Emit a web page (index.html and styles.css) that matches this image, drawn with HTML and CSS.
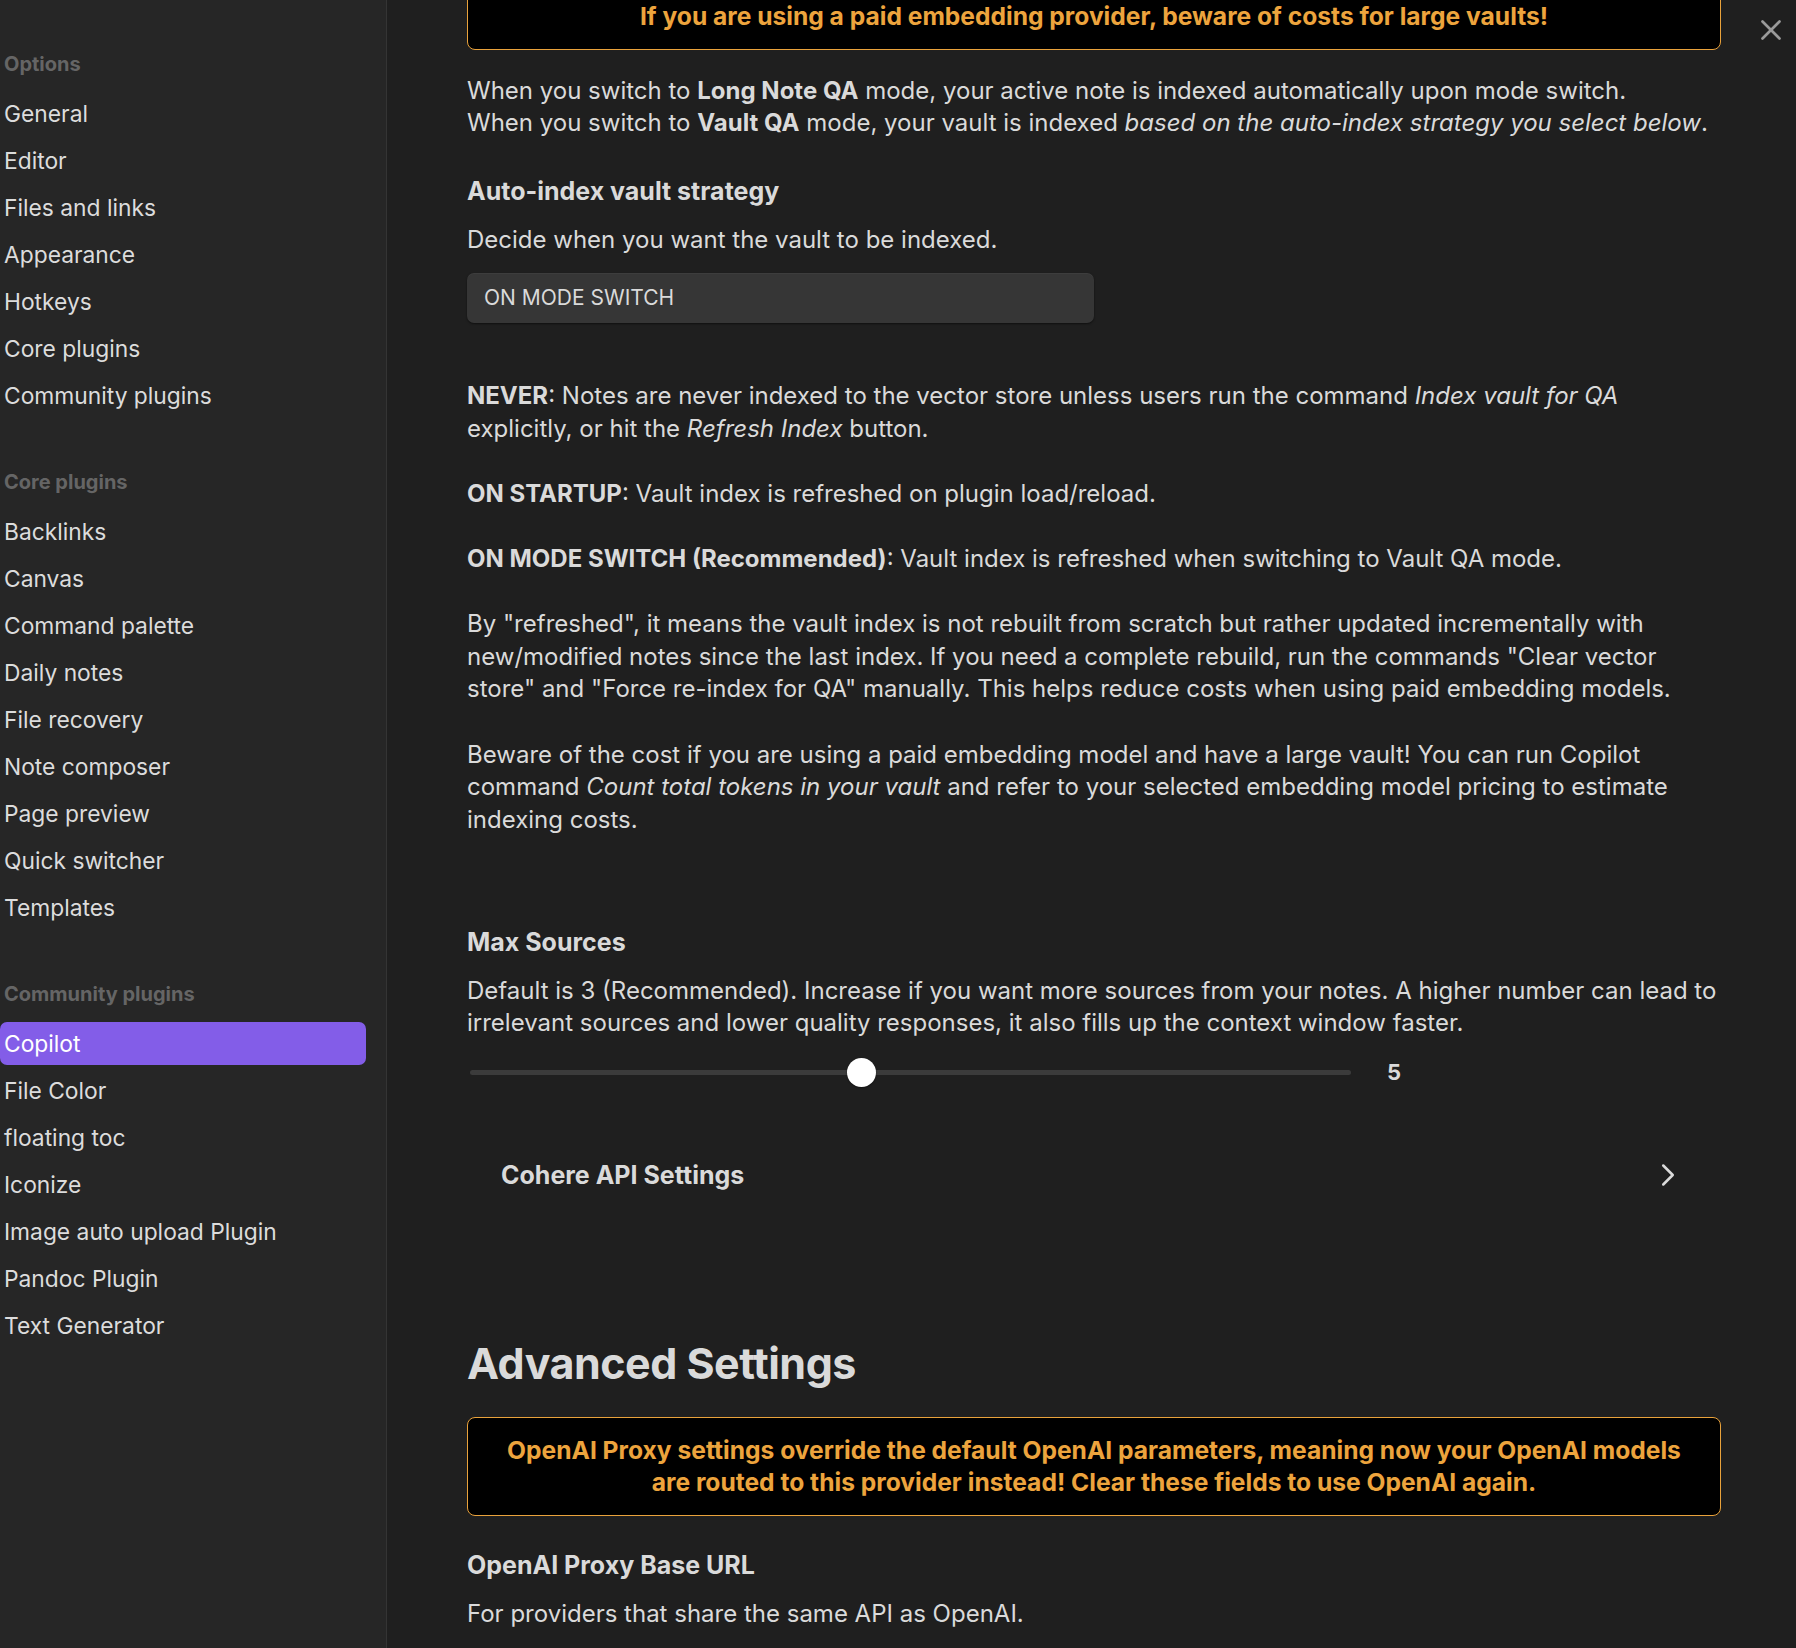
FILE: index.html
```html
<!DOCTYPE html>
<html lang="en">
<head>
<meta charset="utf-8">
<title>Settings - Copilot</title>
<link rel="stylesheet" href="styles.css">
</head>
<body>
<div class="modal">
  <nav class="sidebar">
    <div class="group">
      <div class="group-title">Options</div>
      <div class="nav-item">General</div>
      <div class="nav-item">Editor</div>
      <div class="nav-item">Files and links</div>
      <div class="nav-item">Appearance</div>
      <div class="nav-item">Hotkeys</div>
      <div class="nav-item">Core plugins</div>
      <div class="nav-item">Community plugins</div>
    </div>
    <div class="group">
      <div class="group-title">Core plugins</div>
      <div class="nav-item">Backlinks</div>
      <div class="nav-item">Canvas</div>
      <div class="nav-item">Command palette</div>
      <div class="nav-item">Daily notes</div>
      <div class="nav-item">File recovery</div>
      <div class="nav-item">Note composer</div>
      <div class="nav-item">Page preview</div>
      <div class="nav-item">Quick switcher</div>
      <div class="nav-item">Templates</div>
    </div>
    <div class="group">
      <div class="group-title">Community plugins</div>
      <div class="nav-item active">Copilot</div>
      <div class="nav-item">File Color</div>
      <div class="nav-item">floating toc</div>
      <div class="nav-item">Iconize</div>
      <div class="nav-item">Image auto upload Plugin</div>
      <div class="nav-item">Pandoc Plugin</div>
      <div class="nav-item">Text Generator</div>
    </div>
  </nav>

  <main class="content">
    <div class="callout callout-top">If you are using a paid embedding provider, beware of costs for large vaults!</div>

    <p class="desc intro">When you switch to <strong>Long Note QA</strong> mode, your active note is indexed automatically upon mode switch.<br>When you switch to <strong>Vault QA</strong> mode, your vault is indexed <em>based on the auto-index strategy you select below</em>.</p>

    <div class="setting-name auto-index">Auto-index vault strategy</div>
    <div class="desc setting-desc">Decide when you want the vault to be indexed.</div>
    <div class="dropdown">ON MODE SWITCH</div>

    <div class="explain">
      <p><strong>NEVER</strong>: Notes are never indexed to the vector store unless users run the command <em>Index vault for QA</em> explicitly, or hit the <em>Refresh Index</em> button.</p>
      <p><strong>ON STARTUP</strong>: Vault index is refreshed on plugin load/reload.</p>
      <p><strong>ON MODE SWITCH (Recommended)</strong>: Vault index is refreshed when switching to Vault QA mode.</p>
      <p>By "refreshed", it means the vault index is not rebuilt from scratch but rather updated incrementally with new/modified notes since the last index. If you need a complete rebuild, run the commands "Clear vector store" and "Force re-index for QA" manually. This helps reduce costs when using paid embedding models.</p>
      <p>Beware of the cost if you are using a paid embedding model and have a large vault! You can run Copilot command <em>Count total tokens in your vault</em> and refer to your selected embedding model pricing to estimate indexing costs.</p>
    </div>

    <div class="setting-name max-sources">Max Sources</div>
    <div class="desc setting-desc">Default is 3 (Recommended). Increase if you want more sources from your notes. A higher number can lead to irrelevant sources and lower quality responses, it also fills up the context window faster.</div>
    <div class="slider-row">
      <div class="track"><div class="thumb" style="left: 44.44%"></div></div>
      <span class="slider-value">5</span>
    </div>

    <div class="collapsible">
      <span class="collapsible-title">Cohere API Settings</span>
      <svg class="chevron" viewBox="0 0 24 24" width="38" height="38" fill="none" stroke="currentColor" stroke-width="1.6" stroke-linecap="round" stroke-linejoin="round"><path d="m9 18 6-6-6-6"/></svg>
    </div>

    <h2 class="section-title">Advanced Settings</h2>

    <div class="callout">OpenAI Proxy settings override the default OpenAI parameters, meaning now your OpenAI models are routed to this provider instead! Clear these fields to use OpenAI again.</div>

    <div class="setting-name proxy">OpenAI Proxy Base URL</div>
    <div class="desc setting-desc">For providers that share the same API as OpenAI.</div>
  </main>

  <button class="close" aria-label="Close">
    <svg viewBox="0 0 24 24" width="34" height="34" fill="none" stroke="currentColor" stroke-width="1.9" stroke-linecap="round" stroke-linejoin="round"><path d="M18 6 6 18"/><path d="m6 6 12 12"/></svg>
  </button>
</div>
</body>
</html>
```

FILE: styles.css
```css
* { box-sizing: border-box; }

html, body {
  margin: 0;
  padding: 0;
  background: #1f1f1f;
  height: 100%;
  overflow: hidden;
}

body {
  font-family: Inter, "Liberation Sans", sans-serif;
  color: #dadada;
  -webkit-font-smoothing: antialiased;
}

.modal {
  position: relative;
  display: flex;
  height: 1648px;
}

/* Sidebar */
.sidebar {
  width: 387px;
  flex: none;
  background: #262626;
  border-right: 1px solid #343434;
  padding: 49px 20px 0 0;
  display: flex;
  flex-direction: column;
  gap: 50.5px;
}

.group {
  display: flex;
  flex-direction: column;
  gap: 4px;
}

.group-title {
  height: 30px;
  line-height: 30px;
  padding-left: 4px;
  font-size: 20px;
  font-weight: 700;
  color: #656565;
  margin-bottom: 8.5px;
}

.nav-item {
  height: 43px;
  line-height: 43px;
  padding-left: 4px;
  font-size: 22.8px;
  color: #dcdcdc;
  border-radius: 7px;
  white-space: nowrap;
}

.nav-item.active {
  background: #835de8;
  color: #ffffff;
}

/* Content */
.content {
  flex: 1;
  padding: 0 75px 0 80px;
  font-size: 24px;
  line-height: 32.6px;
}

.content p { margin: 0; }

.callout {
  border: 1px solid #e9a23b;
  border-radius: 8px;
  background: #000;
  color: #eda43d;
  font-size: 24.6px;
  font-weight: 700;
  text-align: center;
  padding: 16px 32px;
  line-height: 32.6px;
}

.callout-top {
  margin-top: -17px;
}

.content .intro {
  margin-top: 25px;
}

.setting-name {
  font-size: 25px;
  font-weight: 700;
  color: #dadada;
}

.auto-index { margin-top: 35px; }
.setting-desc { margin-top: 16.5px; }

.dropdown {
  margin-top: 16.5px;
  width: 627px;
  height: 50px;
  line-height: 50px;
  background: #363636;
  border-radius: 7px;
  padding-left: 17px;
  font-size: 21px;
  color: #dadada;
  box-shadow: 0 1px 2px rgba(0,0,0,0.5), inset 0 1px 0 rgba(255,255,255,0.04);
}

.explain {
  margin-top: 57px;
  display: flex;
  flex-direction: column;
  gap: 32.6px;
}

.max-sources { margin-top: 89.5px; }

.slider-row {
  margin-top: 18px;
  display: flex;
  align-items: center;
  height: 29px;
  padding-left: 3px;
  gap: 36px;
}

.track {
  position: relative;
  width: 881px;
  height: 5px;
  border-radius: 3px;
  background: #3b3b3b;
}

.thumb {
  position: absolute;
  top: 50%;
  width: 29px;
  height: 29px;
  margin: -14.5px 0 0 -14.5px;
  border-radius: 50%;
  background: #ffffff;
  box-shadow: 0 1px 2px rgba(0,0,0,0.4);
}

.slider-value {
  font-weight: 700;
  font-size: 22px;
}

.collapsible {
  margin-top: 71.5px;
  display: flex;
  align-items: center;
  justify-content: space-between;
  padding: 0 34px 0 34px;
  height: 32.6px;
}

.collapsible-title {
  font-size: 25px;
  font-weight: 700;
}

.chevron {
  color: #dadada;
}

.section-title {
  margin: 146px 0 0 0;
  font-size: 43px;
  line-height: 52px;
  font-weight: 700;
  letter-spacing: -0.5px;
  color: #dadada;
}

.section-title + .callout {
  margin-top: 27.5px;
}

.proxy { margin-top: 33.5px; }

.close {
  position: absolute;
  top: 12.5px;
  right: 8px;
  width: 34px;
  height: 34px;
  padding: 0;
  border: 0;
  background: transparent;
  color: #9a9a9a;
  display: flex;
  align-items: center;
  justify-content: center;
}
```
